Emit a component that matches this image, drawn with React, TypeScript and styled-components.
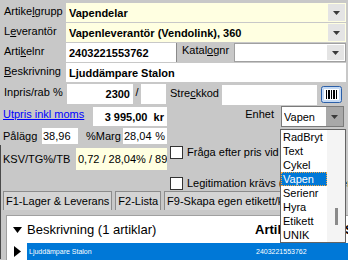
import React from 'react';
import styled, { createGlobalStyle } from 'styled-components';

const GlobalStyle = createGlobalStyle`
  html, body {
    margin: 0;
    padding: 0;
  }
  body {
    background: #c8c8c8;
    font-family: "Liberation Sans", Arial, sans-serif;
    font-size: 11px;
    color: #000;
    overflow: hidden;
  }
`;

const Page = styled.div`
  position: relative;
  width: 348px;
  height: 260px;
  overflow: hidden;
`;

const TopRows = styled.div`
  display: flex;
  flex-direction: column;
  gap: 1px;
  padding: 3px 2px 0 0;
`;

const FormRow = styled.div<{ $h?: number; $mt?: number }>`
  display: flex;
  height: ${p => p.$h ?? 19}px;
  margin-top: ${p => p.$mt ?? 0}px;
`;

const Label = styled.label<{ $w?: number; $lh?: number; $ml?: number }>`
  width: ${p => (p.$w ? `${p.$w}px` : 'auto')};
  flex-shrink: 0;
  padding-left: ${p => p.$ml ?? 4}px;
  box-sizing: border-box;
  line-height: ${p => p.$lh ?? 16}px;
  white-space: nowrap;
`;

const Field = styled.div<{ $w?: number; $bg?: string; $right?: boolean; $bold?: boolean }>`
  ${p => (p.$w ? `width: ${p.$w}px; flex-shrink: 0;` : 'flex: 1;')}
  display: flex;
  align-items: center;
  justify-content: ${p => (p.$right ? 'flex-end' : 'flex-start')};
  box-sizing: border-box;
  padding: 0 3px;
  background: ${p => p.$bg ?? '#fff'};
  font-weight: ${p => (p.$bold ? 700 : 400)};
  white-space: nowrap;
  overflow: hidden;
`;

const ComboText = styled.span`
  flex: 1;
  overflow: hidden;
`;

const DropBtn = styled.span<{ $pressed?: boolean }>`
  width: 17px;
  align-self: stretch;
  margin: ${p => (p.$pressed ? '0' : '1px -2px 1px 0')};
  display: flex;
  align-items: center;
  justify-content: center;
  background: ${p => (p.$pressed ? '#a8a8a8' : '#e4e4e4')};
`;

const Boxed = styled(Field)`
  border: 1px solid #a0a0a0;
  padding-left: 2px;
`;

const KatLabel = styled.div`
  width: 58px;
  flex-shrink: 0;
  box-sizing: border-box;
  padding-left: 5px;
  border-left: 1px solid #8a8a8a;
  line-height: 15px;
  white-space: nowrap;
`;

const Mid = styled.div`
  display: flex;
  margin-top: 2px;
`;

const LeftCol = styled.div`
  width: 167px;
  flex-shrink: 0;
  display: flex;
  flex-direction: column;
`;

const RightCol = styled.div`
  flex: 1;
  display: flex;
  flex-direction: column;
  padding-left: 3px;
`;

const Slash = styled.span`
  width: 8px;
  text-align: center;
  line-height: 16px;
`;

const Link = styled.a`
  width: 93px;
  flex-shrink: 0;
  box-sizing: border-box;
  padding-left: 3px;
  color: #0000ff;
  text-decoration: underline;
  line-height: 14px;
  white-space: nowrap;
`;

const Spread = styled(Field)`
  justify-content: space-between;
  padding: 0 2px 0 1px;
`;

const BarcodeBtn = styled.div`
  margin: 1px 0 0 4px;
  width: 21px;
  height: 17px;
`;

const EnhetRow = styled.div`
  display: flex;
  justify-content: flex-end;
  height: 21px;
  margin-top: 1px;
  padding-right: 4px;
`;

const EnhetCombo = styled.div`
  width: 63px;
  box-sizing: border-box;
  display: flex;
  align-items: center;
  background: #fff;
  border: 1px solid #7a7a7a;
  padding-left: 2px;
  margin-left: 7px;
`;

const Lower = styled.div`
  border-left: 1px solid #4a4a4a;
  margin-top: 1px;
  height: 114px;
`;

const LowerTop = styled.div`
  display: flex;
  height: 46px;
`;

const KsvBlock = styled.div`
  width: 166px;
  flex-shrink: 0;
  display: flex;
  height: 22px;
  margin-top: 3px;
`;

const Checks = styled.div`
  display: flex;
  flex-direction: column;
  gap: 17px;
  padding-left: 3px;
`;

const CheckRow = styled.label`
  display: flex;
  align-items: center;
  height: 14px;
  white-space: nowrap;
`;

const CheckBox = styled.span`
  width: 13px;
  height: 13px;
  flex-shrink: 0;
  box-sizing: border-box;
  background: #fff;
  border: 1px solid #333;
  margin-right: 4px;
`;

const Tabs = styled.div`
  display: flex;
  gap: 3px;
  padding-left: 2px;
  height: 19px;
`;

const Tab = styled.div`
  box-sizing: border-box;
  border: 1px solid #8c8c8c;
  border-bottom: none;
  background: #d4d4d4;
  padding: 0 2px;
  line-height: 18px;
  white-space: nowrap;
`;

const Grid = styled.div`
  margin: 5px 0 0 5px;
  border-top: 1px solid #a0a0a0;
  border-left: 1px solid #a0a0a0;
  background: #fff;
`;

const GridLine = styled.div<{ $h: number; $selected?: boolean }>`
  display: grid;
  grid-template-columns: 20px 228px 25px 65px 1fr;
  align-items: center;
  height: ${p => p.$h}px;
  background: ${p => (p.$selected ? '#0078d7' : '#fff')};
  color: ${p => (p.$selected ? '#fff' : '#000')};
`;

const GroupTitle = styled.span`
  font-size: 13px;
  white-space: nowrap;
`;

const ColHead = styled.span`
  font-size: 13px;
  font-weight: 700;
  white-space: nowrap;
  overflow: hidden;
`;

const Indicator = styled.span`
  align-self: stretch;
  background: #fff;
  display: flex;
  align-items: center;
  justify-content: center;
`;

const Tiny = styled.span`
  font-size: 7px;
  padding-left: 2px;
  white-space: nowrap;
`;

const DropList = styled.div`
  position: absolute;
  left: 280px;
  top: 129px;
  width: 66px;
  height: 114px;
  box-sizing: border-box;
  border: 1px solid #646464;
  background: #fff;
  display: flex;
`;

const Items = styled.div`
  flex: 1;
  display: flex;
  flex-direction: column;
`;

const Item = styled.div<{ $selected?: boolean }>`
  height: 14px;
  line-height: 14px;
  box-sizing: border-box;
  padding-left: 2px;
  white-space: nowrap;
  background: ${p => (p.$selected ? '#0078d7' : 'transparent')};
  color: ${p => (p.$selected ? '#fff' : '#000')};
  outline: ${p => (p.$selected ? '1px dotted #f4a640' : 'none')};
  outline-offset: -1px;
`;

const ScrollTrack = styled.div`
  width: 18px;
  background: #f4f4f4;
  display: flex;
  justify-content: center;
  padding-top: 78px;
  box-sizing: border-box;
`;

const Thumb = styled.div`
  width: 3px;
  height: 17px;
  background: #8a8a8a;
`;

const Arrow = () => (
  <svg width="7" height="4" viewBox="0 0 7 4">
    <polygon points="0,0 7,0 3.5,4" fill="#3a3a3a" />
  </svg>
);

const Barcode = () => (
  <svg width="21" height="17" viewBox="0 0 21 17">
    <rect x="0.5" y="0.5" width="20" height="16" rx="2" fill="#c4d9f3" stroke="#2b5fa8" />
    <rect x="3" y="3" width="15" height="11" fill="#fff" />
    {[5, 7, 8, 10, 12, 13, 15].map(x => (
      <rect key={x} x={x} y="4" width="1" height="9" fill="#000" />
    ))}
  </svg>
);

const enheter = ['RadBryt', 'Text', 'Cykel', 'Vapen', 'Serienr', 'Hyra', 'Etikett', 'UNIK'];

const App: React.FC = () => {
  return (
    <Page>
      <GlobalStyle />
      <TopRows>
        <FormRow>
          <Label $w={66}>Artike<u>l</u>grupp</Label>
          <Field $bg="#ffffe1" $bold>
            <ComboText>Vapendelar</ComboText>
            <DropBtn><Arrow /></DropBtn>
          </Field>
        </FormRow>
        <FormRow>
          <Label $w={66}>L<u>e</u>verantör</Label>
          <Field $bg="#ffffe1" $bold>
            <ComboText>Vapenleverantör (Vendolink), 360</ComboText>
            <DropBtn><Arrow /></DropBtn>
          </Field>
        </FormRow>
        <FormRow>
          <Label $w={66}>Arti<u>k</u>elnr</Label>
          <Field $w={110} $bold>2403221553762</Field>
          <KatLabel>Katal<u>o</u>gnr</KatLabel>
          <Boxed>
            <ComboText></ComboText>
            <DropBtn><Arrow /></DropBtn>
          </Boxed>
        </FormRow>
        <FormRow>
          <Label $w={66}><u>B</u>eskrivning</Label>
          <Field $bold>Ljuddämpare Stalon</Field>
        </FormRow>
      </TopRows>

      <Mid>
        <LeftCol>
          <FormRow $h={20}>
            <Label $w={67}>Inpris/rab %</Label>
            <Field $w={66} $right $bold>2300</Field>
            <Slash>/</Slash>
            <Field $w={25} />
          </FormRow>
          <FormRow $h={19} $mt={3}>
            <Link>Utpris inkl moms</Link>
            <Field $w={74} $right $bold>3 995,00&nbsp;&nbsp;kr</Field>
          </FormRow>
          <FormRow $h={16} $mt={2}>
            <Label $w={42} $ml={3}>Pålägg</Label>
            <Spread $w={36}>38,96</Spread>
            <Label $w={45} $ml={8}>%Marg</Label>
            <Spread $w={44}>
              <span>28,04</span>
              <span>%</span>
            </Spread>
          </FormRow>
        </LeftCol>
        <RightCol>
          <FormRow $h={20} $mt={1}>
            <Label $w={52} $ml={0}>Stre<u>c</u>kkod</Label>
            <Field $w={95} />
            <BarcodeBtn><Barcode /></BarcodeBtn>
          </FormRow>
          <EnhetRow>
            <Label $ml={0}>Enhet</Label>
            <EnhetCombo>
              <ComboText>Vapen</ComboText>
              <DropBtn $pressed><Arrow /></DropBtn>
            </EnhetCombo>
          </EnhetRow>
        </RightCol>
      </Mid>

      <Lower>
        <LowerTop>
          <KsvBlock>
            <Label $w={75} $ml={2} $lh={22}>KSV/TG%/TB</Label>
            <Field $bg="#ffffe1" style={{ padding: '0 2px' }}>0,72 / 28,04% / 896,00 kr</Field>
          </KsvBlock>
          <Checks>
            <CheckRow>
              <CheckBox />
              Fråga efter pris vid försäljning
            </CheckRow>
            <CheckRow>
              <CheckBox />
              Legitimation krävs (ålder och licens) e
            </CheckRow>
          </Checks>
        </LowerTop>
        <Tabs>
          <Tab>F1-Lager &amp; Leverans</Tab>
          <Tab>F2-Lista</Tab>
          <Tab>F9-Skapa egen etikett/kvitto</Tab>
        </Tabs>
        <Grid>
          <GridLine $h={27}>
            <Indicator>
              <svg width="9" height="6" viewBox="0 0 9 6">
                <polygon points="0,0 9,0 4.5,6" fill="#000" />
              </svg>
            </Indicator>
            <GroupTitle>Beskrivning (1 artiklar)</GroupTitle>
            <ColHead>Artikelnr</ColHead>
            <span />
            <ColHead>S</ColHead>
          </GridLine>
          <GridLine $h={17} $selected>
            <Indicator>
              <svg width="7" height="11" viewBox="0 0 7 11">
                <polygon points="0,0 7,5.5 0,11" fill="#000" />
              </svg>
            </Indicator>
            <Tiny>Ljuddämpare Stalon</Tiny>
            <span />
            <Tiny style={{ marginLeft: -26 }}>2403221553762</Tiny>
            <span />
          </GridLine>
        </Grid>
      </Lower>

      <DropList>
        <Items>
          {enheter.map(e => (
            <Item key={e} $selected={e === 'Vapen'}>{e}</Item>
          ))}
        </Items>
        <ScrollTrack>
          <Thumb />
        </ScrollTrack>
      </DropList>
    </Page>
  );
};

export default App;
